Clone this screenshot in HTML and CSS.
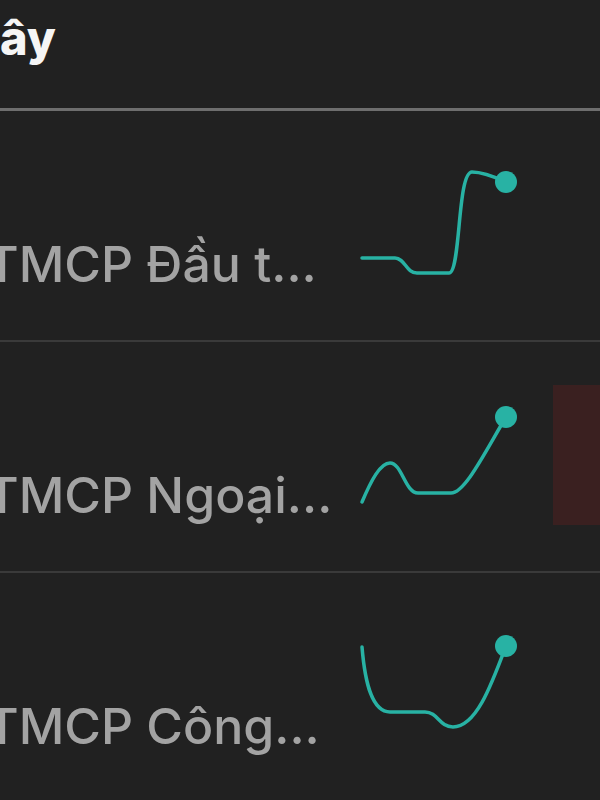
FILE: index.html
```html
<!DOCTYPE html>
<html>
	<head>
		<meta charset="utf-8">
		<link rel="stylesheet" href="styles.css">
	</head>
	<body>
		<div class="header">
			<h1 class="title">ây</h1>
		</div>

		<div class="stockRow">
			<div class="stockName">TMCP Đầu t...</div>
			<svg class="spark" viewBox="0 0 165 229">
				<path d="M7 147 L40 147 C50 147 51 162 62 162 L94 162 C106 162 102 61 117 61 C128 61 140 66 151 71" />
				<circle cx="151" cy="71" r="11" />
			</svg>
			<div class="priceCell"></div>
		</div>

		<div class="stockRow">
			<div class="stockName">TMCP Ngoại...</div>
			<svg class="spark" viewBox="0 0 165 229">
				<path d="M7 160 C16 139 25 121 35 121 C47 121 50 151 63 151 L96 151 C110 151 130 110 151 75" />
				<circle cx="151" cy="75" r="11" />
			</svg>
			<div class="priceCell"><div class="priceBox down"></div></div>
		</div>

		<div class="stockRow">
			<div class="stockName">TMCP Công...</div>
			<svg class="spark" viewBox="0 0 165 229">
				<path d="M7 74 C10 110 17 139 35 139 L70 139 C83 139 84 154 98 154 C121 154 136 113 151 73" />
				<circle cx="151" cy="73" r="11" />
			</svg>
			<div class="priceCell"></div>
		</div>
	</body>
</html>
```

FILE: styles.css
```css
body {
	margin: 0;
	width: 600px;
	height: 800px;
	overflow: hidden;
	background-color: rgb(33, 33, 33);
	font-family: Inter, "Noto Sans", sans-serif;
}

.header {
	height: 108px;
	border-bottom: 3px solid rgb(110, 110, 110);
}
.title {
	margin: 0;
	padding-top: 14px;
	font-size: 47px;
	line-height: 1;
	font-weight: 800;
	color: rgb(245, 245, 245);
}

.stockRow {
	display: flex;
	height: 229px;
	border-bottom: 2px solid rgb(58, 58, 58);
}
.stockName {
	flex: none;
	width: 369px;
	margin-left: -14px;
	padding-top: 128px;
	font-size: 50px;
	line-height: 1;
	font-weight: 500;
	color: rgb(163, 163, 163);
	white-space: nowrap;
}

.spark {
	flex: none;
	width: 165px;
	height: 229px;
}
.spark path {
	fill: none;
	stroke: rgb(40, 178, 164);
	stroke-width: 3.5;
	stroke-linecap: round;
}
.spark circle {
	fill: rgb(40, 178, 164);
}

.priceCell {
	flex: none;
	padding-left: 33px;
}
.priceBox {
	width: 70px;
	height: 140px;
	margin-top: 43px;
}
.priceBox.down {
	background-color: rgb(58, 32, 32);
}
```
